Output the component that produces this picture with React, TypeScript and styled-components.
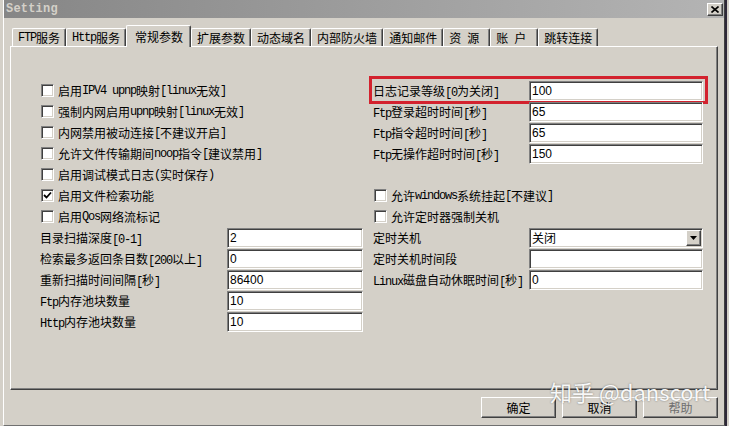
import React from 'react';
import styled, { createGlobalStyle, css } from 'styled-components';

const GlobalStyle = createGlobalStyle`
  html, body { margin: 0; padding: 0; }
  body {
    background: #d4d0c8;
    font-family: "Noto Sans CJK SC", sans-serif;
    font-size: 12px;
    color: #000;
    overflow: hidden;
  }
`;

const raised = css`
  border: 1px solid;
  border-color: #fff #404040 #404040 #fff;
  box-shadow: inset -1px -1px 0 #808080, inset 1px 1px 0 #d4d0c8;
`;

const sunken = css`
  border: 1px solid;
  border-color: #808080 #fff #fff #808080;
  box-shadow: inset 1px 1px 0 #404040, inset -1px -1px 0 #d4d0c8;
`;

// SimSun-like half width latin: every ASCII run gets a 6px monospace
const Latin = styled.span`
  font-family: "Liberation Mono", monospace;
  font-size: 12px;
  letter-spacing: -1.2px;
  white-space: pre;
`;

function Txt({ text }: { text: string }) {
  const parts = text.split(/([\x20-\x7e]+)/).filter(Boolean);
  return (
    <>
      {parts.map((p, i) =>
        /^[\x20-\x7e]+$/.test(p) ? <Latin key={i}>{p}</Latin> : <span key={i}>{p}</span>
      )}
    </>
  );
}

const Window = styled.div`
  position: relative;
  margin-left: 3px;
  width: 722px;
  height: 426px;
  box-sizing: border-box;
  border-left: 1px solid #fff;
  border-right: 1px solid #404040;
  border-bottom: 1px solid #707070;
  box-shadow: 2px 0 0 #2e2838;
  display: flex;
  flex-direction: column;
`;

const TitleBar = styled.div`
  height: 18px;
  padding: 0 1px 0 2px;
  display: flex;
  align-items: center;
  justify-content: space-between;
  background: linear-gradient(to right, #868686, #b4b4b4);
`;

const Title = styled.span`
  font-family: "Liberation Mono", monospace;
  font-weight: bold;
  font-size: 12px;
  color: #d4d0c8;
  letter-spacing: 0.2px;
`;

const CloseBtn = styled.div`
  ${raised};
  width: 16px;
  height: 13px;
  box-sizing: border-box;
  background: #d4d0c8;
  display: flex;
  align-items: center;
  justify-content: center;
`;

const TabStrip = styled.div`
  display: flex;
  align-items: flex-end;
  height: 21px;
  margin: 7px 6px 0;
  padding-left: 2px;
`;

const Tab = styled.div<{ $active?: boolean; $w?: number }>`
  position: relative;
  z-index: ${(p) => (p.$active ? 1 : 0)};
  height: ${(p) => (p.$active ? 22 : 18)}px;
  margin-bottom: ${(p) => (p.$active ? -1 : 0)}px;
  padding: ${(p) => (p.$active ? '0 7px 0 8px' : '0 5px')};
  ${(p) => p.$w && `width: ${p.$w}px;`}
  box-sizing: border-box;
  display: flex;
  align-items: center;
  white-space: nowrap;
  background: #d4d0c8;
  border-top: 1px solid #fff;
  border-left: 1px solid #fff;
  border-right: 1px solid #404040;
  box-shadow: inset -1px 0 0 #808080;
  border-radius: 2px 2px 0 0;
`;

const Panel = styled.div`
  margin: 0 6px;
  height: 344px;
  box-sizing: border-box;
  border-top: 1px solid #fff;
  border-left: 1px solid #fff;
  border-right: 1px solid #404040;
  border-bottom: 1px solid #404040;
  box-shadow: inset -1px -1px 0 #808080;
  padding: 33px 0 0 29px;
  display: flex;
  gap: 10px;
`;

const Column = styled.div<{ $w: number }>`
  width: ${(p) => p.$w}px;
  display: flex;
  flex-direction: column;
`;

const Row = styled.div<{ $mark?: boolean }>`
  position: relative;
  height: 21px;
  display: flex;
  align-items: center;
  white-space: nowrap;
  ${(p) =>
    p.$mark &&
    css`
      &::after {
        content: '';
        position: absolute;
        top: -4px;
        left: -4px;
        right: -5px;
        bottom: -3px;
        border: 3px solid #d3222e;
        pointer-events: none;
      }
    `}
`;

const Label = styled.span<{ $w: number }>`
  width: ${(p) => p.$w}px;
  flex: none;
`;

const Box = styled.div`
  ${sunken};
  width: 13px;
  height: 13px;
  box-sizing: border-box;
  margin: 0 4px 0 1px;
  background: #fff;
  display: flex;
  align-items: center;
  justify-content: center;
`;

const Input = styled.div`
  ${sunken};
  flex: 1;
  height: 20px;
  box-sizing: border-box;
  background: #fff;
  padding: 0 2px;
  display: flex;
  align-items: center;
  font-family: "Liberation Sans", sans-serif;
  font-size: 12px;
`;

const SelectBox = styled(Input)`
  justify-content: space-between;
  padding-right: 1px;
  font-family: "Noto Sans CJK SC", sans-serif;
`;

const DropBtn = styled.div`
  ${raised};
  width: 15px;
  height: 16px;
  box-sizing: border-box;
  background: #d4d0c8;
  display: flex;
  align-items: center;
  justify-content: center;
`;

const ButtonBar = styled.div`
  display: flex;
  justify-content: flex-end;
  gap: 6px;
  padding: 7px 6px 0 0;
`;

const Button = styled.div<{ $disabled?: boolean }>`
  ${raised};
  width: 75px;
  height: 21px;
  box-sizing: border-box;
  background: #d4d0c8;
  display: flex;
  align-items: center;
  justify-content: center;
  color: ${(p) => (p.$disabled ? '#6f6f6f' : '#000')};
`;

const Watermark = styled.div`
  position: absolute;
  left: 546px;
  top: 380px;
  font-family: "Noto Sans CJK SC", sans-serif;
  font-size: 22px;
  line-height: 1;
  color: rgba(255, 255, 255, 0.95);
  text-shadow: 0 0 2px rgba(0, 0, 0, 0.45);
  white-space: nowrap;
  pointer-events: none;
`;

function Check({ label, checked }: { label: string; checked?: boolean }) {
  return (
    <Row>
      <Box>
        {checked && (
          <svg width="9" height="9" viewBox="0 0 9 9">
            <path d="M1 4 L3.5 6.5 L8 1.5" stroke="#000" strokeWidth="1.8" fill="none" />
          </svg>
        )}
      </Box>
      <Txt text={label} />
    </Row>
  );
}

function Field({ label, value, w, mark }: { label: string; value: string; w: number; mark?: boolean }) {
  return (
    <Row $mark={mark}>
      <Label $w={w}>
        <Txt text={label} />
      </Label>
      <Input>{value}</Input>
    </Row>
  );
}

const tabs: { label: string; active?: boolean; w?: number }[] = [
  { label: 'FTP服务' },
  { label: 'Http服务' },
  { label: '常规参数', active: true },
  { label: '扩展参数' },
  { label: '动态域名' },
  { label: '内部防火墙' },
  { label: '通知邮件' },
  { label: '资 源', w: 47 },
  { label: '账 户', w: 48 },
  { label: '跳转连接' },
];

export default function App() {
  return (
    <>
      <GlobalStyle />
      <Window>
        <TitleBar>
          <Title>Setting</Title>
          <CloseBtn>
            <svg width="8" height="7" viewBox="0 0 8 7">
              <path d="M0.5 0.5 L7.5 6.5 M7.5 0.5 L0.5 6.5" stroke="#000" strokeWidth="1.6" />
            </svg>
          </CloseBtn>
        </TitleBar>

        <TabStrip>
          {tabs.map((t) => (
            <Tab key={t.label} $active={t.active} $w={t.w}>
              <Txt text={t.label} />
            </Tab>
          ))}
        </TabStrip>

        <Panel>
          <Column $w={323}>
            <Check label="启用IPV4 upnp映射[linux无效]" />
            <Check label="强制内网启用upnp映射[linux无效]" />
            <Check label="内网禁用被动连接[不建议开启]" />
            <Check label="允许文件传输期间noop指令[建议禁用]" />
            <Check label="启用调试模式日志(实时保存)" />
            <Check label="启用文件检索功能" checked />
            <Check label="启用Qos网络流标记" />
            <Field w={187} label="目录扫描深度[0-1]" value="2" />
            <Field w={187} label="检索最多返回条目数[200以上]" value="0" />
            <Field w={187} label="重新扫描时间间隔[秒]" value="86400" />
            <Field w={187} label="Ftp内存池块数量" value="10" />
            <Field w={187} label="Http内存池块数量" value="10" />
          </Column>

          <Column $w={330}>
            <Field w={156} label="日志记录等级[0为关闭]" value="100" mark />
            <Field w={156} label="Ftp登录超时时间[秒]" value="65" />
            <Field w={156} label="Ftp指令超时时间[秒]" value="65" />
            <Field w={156} label="Ftp无操作超时时间[秒]" value="150" />
            <Row />
            <Check label="允许windows系统挂起[不建议]" />
            <Check label="允许定时器强制关机" />
            <Row>
              <Label $w={156}>定时关机</Label>
              <SelectBox>
                关闭
                <DropBtn>
                  <svg width="7" height="4" viewBox="0 0 7 4">
                    <path d="M0 0 H7 L3.5 4 Z" fill="#000" />
                  </svg>
                </DropBtn>
              </SelectBox>
            </Row>
            <Field w={156} label="定时关机时间段" value="" />
            <Field w={156} label="Linux磁盘自动休眠时间[秒]" value="0" />
          </Column>
        </Panel>

        <ButtonBar>
          <Button>确定</Button>
          <Button>取消</Button>
          <Button $disabled>帮助</Button>
        </ButtonBar>

        <Watermark>知乎 @danscort</Watermark>
      </Window>
    </>
  );
}
